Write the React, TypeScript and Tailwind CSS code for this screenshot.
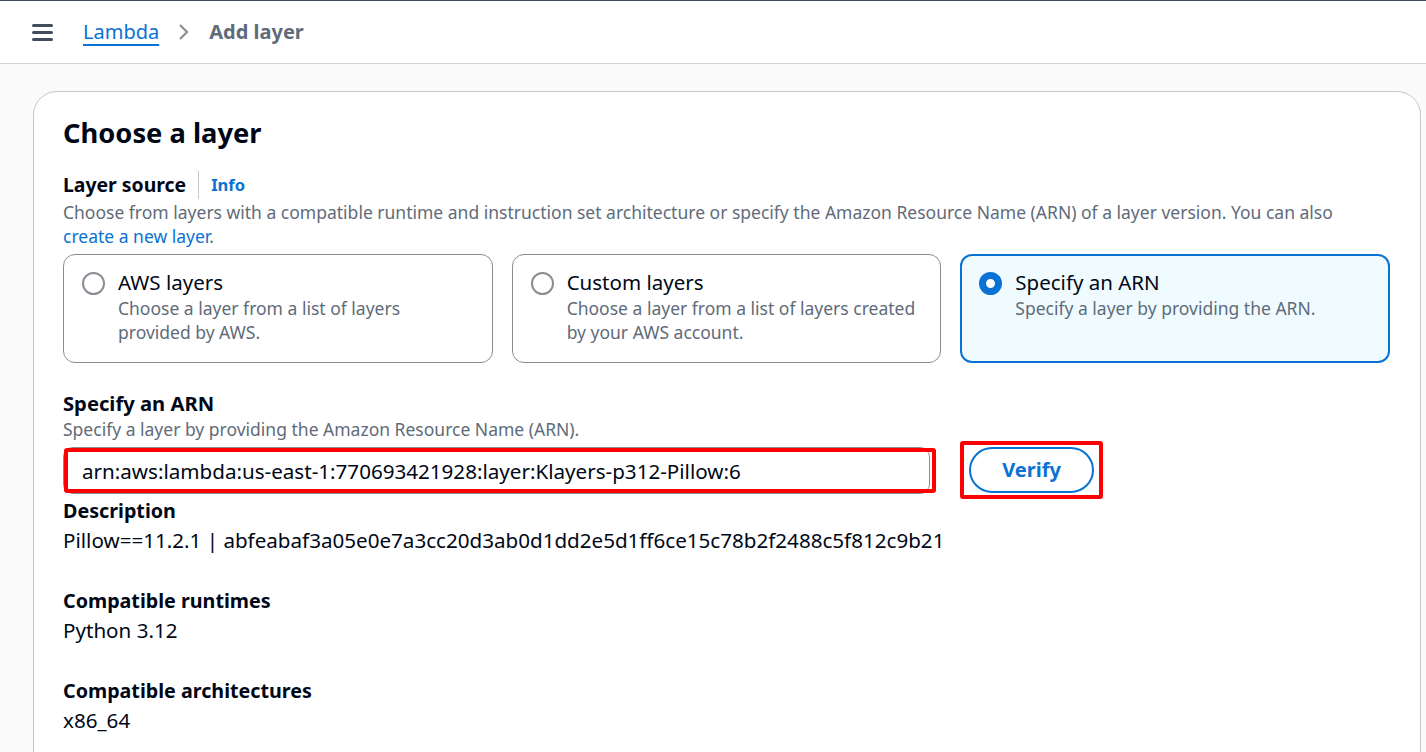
import React from 'react'

const font = { fontFamily: '"Noto Sans", "Open Sans", Arial, sans-serif' }

function Tile({ title, desc, selected }: { title: string; desc: React.ReactNode; selected?: boolean }) {
    return (
        <div
            className={
                "flex gap-[13px] rounded-[12px] h-[109px] " +
                (selected
                    ? "border-2 border-[#0972d3] bg-[#f0fbff] pl-[17px] pt-[12px]"
                    : "border border-[#8c8c94] bg-white pl-[18px] pt-[13px]")
            }
        >
            <div className="pt-[4px]">
                {selected ? (
                    <div className="w-[23px] h-[23px] rounded-full border-[7px] border-[#0972d3] bg-white" />
                ) : (
                    <div className="w-[23px] h-[23px] rounded-full border-2 border-[#8c8c94] bg-white" />
                )}
            </div>
            <div>
                <div className="text-[20.5px] leading-[28px] text-[#000716]">{title}</div>
                <div className="text-[17.5px] leading-[24px] text-[#5f6b7a]">{desc}</div>
            </div>
        </div>
    )
}

function Field({ label, value }: { label: string; value: string }) {
    return (
        <div>
            <div className="text-[19.7px] leading-[29px] font-bold text-[#000716]">{label}</div>
            <div className="text-[20.6px] leading-[30px] text-[#000716]">{value}</div>
        </div>
    )
}

export default function App() {
    return (
        <div style={font} className="w-[1426px] h-[752px] overflow-hidden bg-[#fafafa] border-t border-[#414d5c]">
            <header className="h-[63px] bg-white border-b border-[#d1d5db] flex items-center">
                <div className="pl-[32px] pr-[30px] flex flex-col gap-[4px]">
                    <div className="w-[21px] h-[3px] bg-[#414d5c] rounded-sm" />
                    <div className="w-[21px] h-[3px] bg-[#414d5c] rounded-sm" />
                    <div className="w-[21px] h-[3px] bg-[#414d5c] rounded-sm" />
                </div>
                <a className="text-[20px] text-[#0972d3] underline underline-offset-[5px] decoration-2">Lambda</a>
                <svg width="14" height="18" viewBox="0 0 14 18" className="mx-[18px]">
                    <path d="M3 2l7 7-7 7" fill="none" stroke="#8c8c94" strokeWidth="2.2" />
                </svg>
                <span className="text-[20px] font-bold text-[#5f6b7a]">Add layer</span>
            </header>

            <div className="pl-[33px] pr-[5px] pt-[27px]">
                <div className="bg-white border border-[#c6c6cd] rounded-[24px] pl-[29px] pr-[30px] pt-[23px] h-[700px]">
                    <h1 className="text-[27.3px] leading-[36px] font-bold text-[#000716]">Choose a layer</h1>

                    <div className="mt-[20px] flex items-center h-[28px]">
                        <span className="text-[19.4px] leading-[28px] font-bold text-[#000716]">Layer source</span>
                        <span className="mx-[12px] w-px h-[28px] bg-[#c6c6cd]" />
                        <span className="text-[16.5px] font-bold text-[#0972d3]">Info</span>
                    </div>
                    <p className="mt-[1px] text-[17.5px] leading-[24px] text-[#5f6b7a] w-[1300px]">
                        Choose from layers with a compatible runtime and instruction set architecture or specify the Amazon Resource Name (ARN) of a layer version. You can also{" "}
                        <span className="text-[#0972d3]">create a new layer</span>.
                    </p>

                    <div className="mt-[6px] grid grid-cols-3 gap-[19px] w-[1327px]">
                        <Tile title="AWS layers" desc={<>Choose a layer from a list of layers<br />provided by AWS.</>} />
                        <Tile title="Custom layers" desc={<>Choose a layer from a list of layers created<br />by your AWS account.</>} />
                        <Tile title="Specify an ARN" desc="Specify a layer by providing the ARN." selected />
                    </div>

                    <div className="mt-[26px] text-[20.2px] leading-[28px] font-bold text-[#000716]">Specify an ARN</div>
                    <div className="text-[17.5px] leading-[24px] text-[#5f6b7a]">Specify a layer by providing the Amazon Resource Name (ARN).</div>

                    <div className="mt-[6px] flex items-start">
                        <div className="relative w-[867px] h-[47px] rounded-[10px] border border-[#8c8c94]">
                            <div className="absolute left-[0px] -right-[7px] top-[0px] h-[45px] border-[4px] border-[#ff0000] rounded-[3px]" />
                            <div className="pl-[18px] text-[20.6px] leading-[46px] text-[#000716]">arn:aws:lambda:us-east-1:770693421928:layer:Klayers-p312-Pillow:6</div>
                        </div>
                        <div className="ml-[30px] -mt-[6px] w-[143px] h-[58px] border-[4px] border-[#ff0000] rounded-[3px] flex items-center justify-center">
                            <div className="w-[125px] h-[46px] rounded-full border-2 border-[#0972d3] flex items-center justify-center text-[20px] font-bold text-[#0972d3]">
                                Verify
                            </div>
                        </div>
                    </div>

                    <div className="-mt-[3px]">
                        <Field label="Description" value="Pillow==11.2.1 | abfeabaf3a05e0e7a3cc20d3ab0d1dd2e5d1ff6ce15c78b2f2488c5f812c9b21" />
                    </div>
                    <div className="mt-[31px]">
                        <Field label="Compatible runtimes" value="Python 3.12" />
                    </div>
                    <div className="mt-[31px]">
                        <Field label="Compatible architectures" value="x86_64" />
                    </div>
                </div>
            </div>
        </div>
    )
}
